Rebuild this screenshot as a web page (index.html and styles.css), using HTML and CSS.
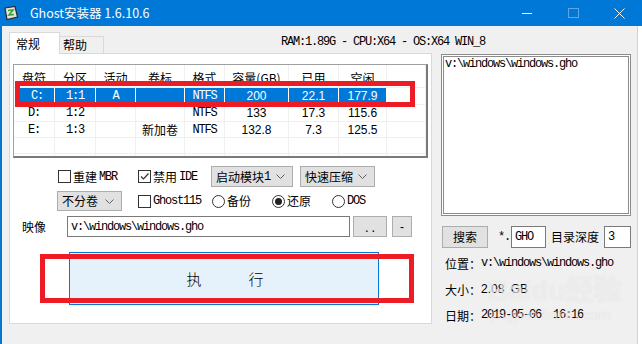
FILE: index.html
```html
<!DOCTYPE html>
<html lang="zh-CN">

<head>
    <meta charset="UTF-8">
    <title>Ghost安装器 1.6.10.6</title>
    <link rel="stylesheet" href="styles.css">
</head>

<body>
    <div class="titlebar">
        <svg class="app-icon" width="16" height="16" viewBox="0 0 16 16">
            <path d="M2 3 L12 1.5 L14.5 12 L4 14.5 Z" fill="#e4e4dc" stroke="#2b2b2b" stroke-width="1.2" />
            <path d="M5 5.5 L10 5 L6 10 L11 9.5" fill="none" stroke="#3aa03a" stroke-width="1.6" />
        </svg>
        <span class="title">Ghost安装器 1.6.10.6</span>
        <div class="controls">
            <span class="ctl"><svg width="10" height="10"><path d="M0 5.5 H10" stroke="#fff" /></svg></span>
            <span class="ctl"><svg width="11" height="11"><rect x="0.5" y="0.5" width="10" height="9" fill="none" stroke="#5ea6e4" /></svg></span>
            <span class="ctl"><svg width="11" height="11"><path d="M0.5 0.5 L10.5 10.5 M10.5 0.5 L0.5 10.5" stroke="#fff" /></svg></span>
        </div>
    </div>

    <div class="client">
        <div class="toprow">
            <div class="tab active">常规</div>
            <div class="tab">帮助</div>
            <div class="sysinfo mono">RAM:1.89G - CPU:X64 - OS:X64 WIN_8</div>
        </div>

        <div class="main">
            <div class="panel">
                <div class="list">
                    <div class="th">盘符</div>
                    <div class="th">分区</div>
                    <div class="th">活动</div>
                    <div class="th">卷标</div>
                    <div class="th">格式</div>
                    <div class="th">容量(GB)</div>
                    <div class="th">已用</div>
                    <div class="th">空闲</div>
                    <div class="th"></div>

                    <div class="td sel first mono">C:</div>
                    <div class="td sel mono">1:1</div>
                    <div class="td sel mono">A</div>
                    <div class="td sel"></div>
                    <div class="td sel mono">NTFS</div>
                    <div class="td sel num">200</div>
                    <div class="td sel num">22.1</div>
                    <div class="td sel num">177.9</div>
                    <div class="td"></div>

                    <div class="td mono">D:</div>
                    <div class="td mono">1:2</div>
                    <div class="td"></div>
                    <div class="td"></div>
                    <div class="td mono">NTFS</div>
                    <div class="td num">133</div>
                    <div class="td num">17.3</div>
                    <div class="td num">115.6</div>
                    <div class="td"></div>

                    <div class="td mono">E:</div>
                    <div class="td mono">1:3</div>
                    <div class="td"></div>
                    <div class="td">新加卷</div>
                    <div class="td mono">NTFS</div>
                    <div class="td num">132.8</div>
                    <div class="td num">7.3</div>
                    <div class="td num">125.5</div>
                    <div class="td"></div>

                    <div class="td"></div><div class="td"></div><div class="td"></div>
                    <div class="td"></div><div class="td"></div><div class="td"></div>
                    <div class="td"></div><div class="td"></div><div class="td"></div>

                    <div class="td"></div><div class="td"></div><div class="td"></div>
                    <div class="td"></div><div class="td"></div><div class="td"></div>
                    <div class="td"></div><div class="td"></div><div class="td"></div>
                </div>

                <div class="opt-row row1">
                    <label class="check w80"><span class="box"></span>重建<span class="mono">MBR</span></label>
                    <label class="check w73"><span class="box"><svg width="11" height="11"><path d="M2 5.5 L4.5 8 L9.5 2.5" fill="none" stroke="#333" stroke-width="1.2" /></svg></span>禁用<span class="mono">IDE</span></label>
                    <div class="select w82">启动模块<span class="mono">1</span><svg class="chev" width="9" height="6"><path d="M0.5 0.5 L4.5 4.5 L8.5 0.5" fill="none" stroke="#606060" /></svg></div>
                    <div class="select w75 gap7">快速压缩<svg class="chev" width="9" height="6"><path d="M0.5 0.5 L4.5 4.5 L8.5 0.5" fill="none" stroke="#606060" /></svg></div>
                </div>

                <div class="opt-row row2">
                    <div class="select w65">不分卷<svg class="chev" width="9" height="6"><path d="M0.5 0.5 L4.5 4.5 L8.5 0.5" fill="none" stroke="#606060" /></svg></div>
                    <label class="check w74 gap16"><span class="box"></span><span class="mono">Ghost115</span></label>
                    <label class="check w60"><span class="radio"></span>备份</label>
                    <label class="check w60"><span class="radio on"></span>还原</label>
                    <label class="check"><span class="radio"></span><span class="mono">DOS</span></label>
                </div>

                <div class="opt-row row3">
                    <span class="img-label">映像</span>
                    <div class="field mono">v:\windows\windows.gho</div>
                    <div class="btn dots">..</div>
                    <div class="btn minus">-</div>
                </div>

                <div class="exec"><span>执</span><span>行</span></div>
            </div>

            <div class="side">
                <div class="listbox mono">v:\windows\windows.gho</div>
                <div class="search">
                    <div class="btn search-btn">搜索</div>
                    <span class="mono star">*.</span>
                    <div class="field ext mono">GHO</div>
                    <span class="depth-label">目录深度</span>
                    <div class="field depth mono">3</div>
                </div>
                <div class="info">位置：<span class="mono">v:\windows\windows.gho</span></div>
                <div class="info">大小：<span class="size">2.08 GB</span></div>
                <div class="info">日期：<span class="mono">2019-05-06  16:16</span></div>
            </div>
        </div>
    </div>

    <!-- faint watermark and red annotation boxes lie over the window -->
    <div class="watermark">
        <div class="wm-big">Baidu经验</div>
        <div class="wm-small">jingyan.baidu.com</div>
    </div>
    <div class="mark mark-row"></div>
    <div class="mark mark-exec"></div>
</body>

</html>
```

FILE: styles.css
```css
/* Reset */
* {
    margin: 0;
    padding: 0;
    box-sizing: border-box;
}

body {
    width: 642px;
    height: 344px;
    overflow: hidden;
    position: relative;
    background: #ffffff;
    font-family: "Noto Sans CJK SC", sans-serif;
    font-size: 12px;
    line-height: 16px;
    color: #000;
}

.mono {
    font-family: "Liberation Mono", "Noto Sans CJK SC", monospace;
    font-size: 12px;
    letter-spacing: -1.2px;
    white-space: pre;
}

/* Title bar */
.titlebar {
    height: 26px;
    background: #0078d7;
    color: #fff;
    display: flex;
    align-items: center;
}

.app-icon {
    margin-left: 3px;
}

.title {
    margin-left: 11px;
    font-size: 12.5px;
}

.controls {
    margin-left: auto;
    display: flex;
}

.ctl {
    width: 46px;
    height: 26px;
    display: flex;
    align-items: center;
    justify-content: center;
}

/* Window body */
.client {
    width: 638px;
    height: 318px;
    background: #f0f0f0;
    border-left: 2px solid #0078d7;
    border-right: 1px solid #d4d4d4;
}

.toprow {
    height: 27px;
    padding-left: 7px;
    display: flex;
    align-items: flex-end;
}

.tab {
    height: 17px;
    width: 44px;
    padding-left: 3px;
    line-height: 16px;
    font-size: 12px;
    border: 1px solid #d9d9d9;
    border-left: none;
    border-bottom: none;
    background: #f0f0f0;
}

.tab.active {
    position: relative;
    z-index: 1;
    width: 51px;
    height: 22px;
    margin-bottom: -1px;
    padding: 3px 0 0 6px;
    border-left: 1px solid #d9d9d9;
    background: #fff;
}

.sysinfo {
    margin-left: 177px;
    align-self: center;
    margin-top: 4px;
}

.main {
    display: flex;
    padding-left: 7px;
}

/* Left tab panel */
.panel {
    width: 423px;
    height: 271px;
    background: #fff;
    border: 1px solid #d9d9d9;
}

.list {
    margin: 10px 0 0 3px;
    width: 415px;
    height: 94px;
    overflow: hidden;
    border-top: 1px solid #a0a0a0;
    border-left: 1px solid #a0a0a0;
    border-right: 2px solid #7a7a7a;
    border-bottom: 2px solid #7a7a7a;
    display: grid;
    grid-template-columns: 41px 41px 40px 49px 40px 64px 50px 48px 1fr;
    grid-template-rows: 23px 17px 17px 16px 16px 16px;
}

.th,
.td {
    border-right: 1px solid #f0f0f0;
    border-bottom: 1px solid #f0f0f0;
    display: flex;
    align-items: center;
    justify-content: center;
}

.th {
    padding-top: 4px;
}

.num {
    font-family: "Liberation Sans", sans-serif;
    font-size: 12px;
}

.td.sel {
    background: #0078d7;
    color: #fff;
    border-right-color: #fff;
    border-bottom-color: #0078d7;
}

.td.first {
    margin-left: 6px;
}

/* Option rows */
.opt-row {
    display: flex;
    align-items: center;
}

.row1 {
    margin-top: 8px;
    height: 21px;
    padding-left: 48px;
}

.row2 {
    margin-top: 4px;
    height: 20px;
    padding-left: 47px;
}

.row3 {
    margin-top: 5px;
    height: 21px;
    padding-left: 12px;
}

.check {
    display: flex;
    align-items: center;
    gap: 2px;
}

.box,
.radio {
    width: 13px;
    height: 13px;
    border: 1px solid #333;
    background: #fff;
    display: flex;
    align-items: center;
    justify-content: center;
}

.radio {
    border-radius: 50%;
}

.radio.on::after {
    content: "";
    width: 7px;
    height: 7px;
    border-radius: 50%;
    background: #222;
}

.w60 { width: 60px; }
.w65 { width: 65px; }
.w73 { width: 73px; }
.w74 { width: 74px; }
.w75 { width: 75px; }
.w80 { width: 80px; }
.w82 { width: 82px; }
.gap7 { margin-left: 7px; }
.gap16 { margin-left: 16px; }

.select {
    height: 100%;
    display: flex;
    align-items: center;
    padding-left: 4px;
    background: #e1e1e1;
    border: 1px solid #adadad;
}

.chev {
    margin-left: auto;
    margin-right: 7px;
    margin-top: 1px;
}

.img-label {
    width: 45px;
}

.field {
    height: 100%;
    background: #fff;
    border: 1px solid #7a7a7a;
    padding-left: 3px;
    display: flex;
    align-items: center;
}

.row3 .field {
    width: 283px;
}

.btn {
    height: 100%;
    background: #e1e1e1;
    border: 1px solid #adadad;
    display: flex;
    align-items: center;
    justify-content: center;
}

.dots {
    width: 34px;
    margin-left: 3px;
    font-family: "Liberation Mono", monospace;
    font-size: 11px;
    padding-top: 4px;
}

.minus {
    width: 20px;
    margin-left: 5px;
    font-family: "Liberation Sans", sans-serif;
}

.exec {
    margin: 15px 0 0 59px;
    width: 310px;
    height: 53px;
    background: #e5f1fb;
    border: 1px solid #0078d7;
    display: flex;
    align-items: center;
    justify-content: center;
    gap: 47px;
    font-size: 15px;
    font-weight: 300;
    padding-left: 2px;
}

/* Right column */
.side {
    margin-left: 9px;
    margin-top: 1px;
    width: 190px;
}

.listbox {
    height: 162px;
    background: #fff;
    border: 3px double #8c8c8c;
    padding-left: 1px;
    line-height: 14px;
}

.search {
    margin-top: 10px;
    height: 22px;
    display: flex;
    align-items: center;
}

.search-btn {
    width: 46px;
    margin-left: 1px;
}

.star {
    margin-left: 10px;
}

.ext {
    width: 35px;
    margin-left: 1px;
}

.depth-label {
    margin-left: 5px;
}

.depth {
    width: 27px;
    margin-left: 5px;
}

.info {
    margin-top: 5px;
    height: 21px;
    line-height: 21px;
    padding-left: 4px;
    display: flex;
    align-items: center;
}

.size {
    font-family: "Liberation Sans", sans-serif;
    font-size: 12px;
    word-spacing: 3px;
}

/* Overlays */
.watermark {
    position: absolute;
    left: 488px;
    top: 276px;
    color: rgba(255, 255, 255, 0.55);
    text-shadow: 0 0 1px rgba(170, 170, 170, 0.35);
    font-family: "Liberation Sans", "Noto Sans CJK SC", sans-serif;
    pointer-events: none;
}

.wm-big {
    font-size: 28px;
    line-height: 30px;
    font-weight: bold;
}

.wm-small {
    font-size: 15px;
    line-height: 18px;
    margin-left: 2px;
}

.mark {
    position: absolute;
    border: 5px solid #ed1c24;
}

.mark-row {
    left: 15px;
    top: 81px;
    width: 400px;
    height: 26px;
}

.mark-exec {
    left: 40px;
    top: 254px;
    width: 374px;
    height: 49px;
}
```
